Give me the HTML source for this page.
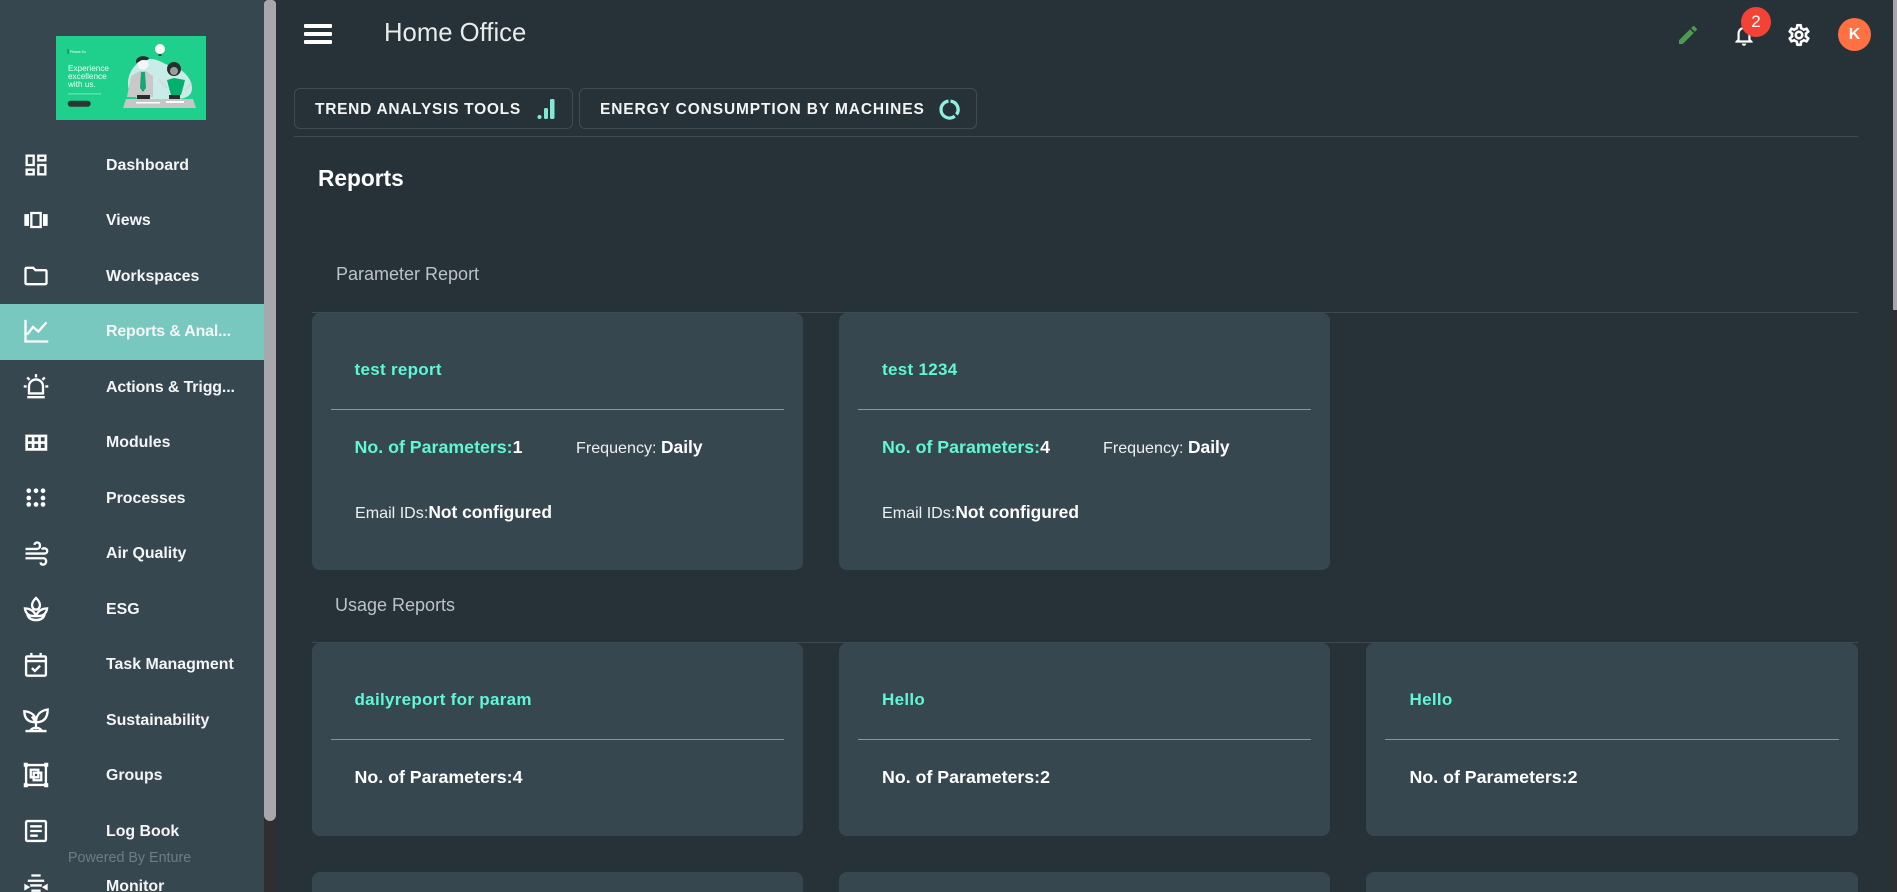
<!DOCTYPE html>
<html><head><meta charset="utf-8"><title>Reports</title>
<style>
*{box-sizing:border-box}
html,body{margin:0;padding:0;width:1897px;height:892px;overflow:hidden;background:#263238;font-family:"Liberation Sans",sans-serif;color:#fff}
#root{position:absolute;left:0;top:0;width:1897px;height:892px;overflow:hidden;background:#263238}
.t{position:absolute;white-space:nowrap;line-height:20px}
.side{position:absolute;left:0;top:0;width:264px;height:892px;background:#37474f;overflow:hidden}
.item{position:absolute;left:106px;font-size:15.9px;font-weight:700;color:#f4f5f5}
.ic{position:absolute;left:21.5px;width:28px;height:28px;fill:none;stroke:#fff;stroke-width:2}
.ic.f{fill:#fff;stroke:none}
.active{position:absolute;left:0;top:304px;width:264px;height:56px;background:#78c8bf}
.track{position:absolute;left:264px;top:0;width:12px;height:892px;background:#2e2f30}
.thumb{position:absolute;left:264px;top:0;width:12px;height:821px;background:#a8a8ac;border-radius:4px 4px 6px 6px}
.card{position:absolute;background:#37474f;border-radius:8px;width:491px}
.div{position:absolute;height:1px;background:#8d9599}
.sec{position:absolute;height:1px;background:#3c4a51;left:312px;width:1546px}
.tab{position:absolute;top:88px;height:41px;border:1px solid #3f4c53;border-radius:6px}
.tabt{font-size:15.5px;font-weight:700;color:#f3f5f5}
.sect{font-size:18px;color:#bcc2c5}
.title{font-size:17px;font-weight:700;letter-spacing:.3px;color:#5ff7d6}
.np{font-size:17.8px;font-weight:700}
.lab{font-size:16.1px;color:#eef0f0}
.val{font-size:17.4px;font-weight:700}
</style></head><body>
<div id="root">

<div class="side">
<svg style="position:absolute;left:56px;top:36px" width="150" height="84" viewBox="0 0 150 84">
<rect width="150" height="84" fill="#1fd08c"/>
<rect x="11.500" y="13" width="1" height="5" fill="#0a7a50"/>
<text x="14" y="17" font-size="3.500" fill="#e8fff6" font-family="Liberation Sans">Please Do</text>
<text x="12" y="35" font-size="8.200" fill="#eafff7" font-family="Liberation Sans">Experience</text>
<text x="12" y="43" font-size="8.200" fill="#eafff7" font-family="Liberation Sans">excellence</text>
<text x="12" y="51" font-size="8.200" fill="#eafff7" font-family="Liberation Sans">with us.</text>
<rect x="12" y="57.500" width="33" height=".8" fill="#c9f5e4" opacity=".7"/>
<rect x="11.700" y="64.700" width="23" height="6" rx="3" fill="#2a3835"/>
<path d="M72 48c0-14 10-25 22-25 10 0 14 6 24 8 10 3 18 12 18 21s-8 11-16 11H88c-8 0-16-4-16-15z" fill="#c9ece8"/>
<circle cx="104" cy="13" r="5" fill="#fff"/><rect x="102.500" y="18" width="3" height="2" fill="#33403e"/>
<path d="M71 61l4-21 9-5h6l7 5v21z" fill="#c9c9c9"/>
<path d="M85 36h4l1 16-3 4-3-4z" fill="#16a873"/>
<circle cx="87" cy="28" r="5.500" fill="#f4f6f5"/><path d="M80 27c-1-6 7-9 13-5-1 3-3 2-6 2s-3 2-7 3z" fill="#262f2e"/>
<rect x="81" y="59" width="13" height="4" fill="#262f2e"/>
<circle cx="118" cy="33" r="7" fill="#262f2e"/><circle cx="118" cy="35" r="4" fill="#9a9e9a"/>
<path d="M111 44l7-2 11 2-2 8-2 7h-10l-2-7z" fill="#03b06e"/>
<rect x="113" y="59" width="11" height="4" fill="#262f2e"/>
<path d="M103 44l8 8M135 47l-6 8" stroke="#d9d9d9" stroke-width="2" fill="none"/>
<path d="M70 63h67l3 9H67z" fill="#c4c7c5"/>
<rect x="80" y="66" width="24" height="1.500" fill="#fff"/><rect x="110" y="65" width="18" height="2" fill="#fff"/>
</svg>

<svg class="ic f" style="top:151px" viewBox="0 0 24 24"><path d="M19 5v2h-4V5h4M9 5v6H5V5h4m10 8v6h-4v-6h4M9 17v2H5v-2h4M21 3h-8v6h8V3zM11 3H3v10h8V3zm10 8h-8v10h8V11zm-10 4H3v6h8v-6z"/></svg>
<svg class="ic f" style="top:206px" viewBox="0 0 24 24"><path d="M2 7h4v10H2V7zm5 12h10V5H7v14zM9 7h6v10H9V7zm9 0h4v10h-4V7z"/></svg>
<svg class="ic f" style="top:262px" viewBox="0 0 24 24"><path d="M9.170 6l2 2H20v10H4V6h5.170M10 4H4c-1.100 0-1.990.9-1.990 2L2 18c0 1.100.9 2 2 2h16c1.100 0 2-.9 2-2V8c0-1.100-.9-2-2-2h-8l-2-2z"/></svg>
<div class="active"></div>
<svg class="ic" style="top:317px" viewBox="0 0 24 24"><path d="M3 2.500V21h19.500M4.500 15l5-6.500 4.500 4 7-8"/></svg>
<svg class="ic" style="top:373px" viewBox="0 0 24 24"><path d="M6 17.500v-6a6 6 0 0 1 12 0v6zM4.500 20.700h15M12 1v2.800M4.500 3.800l2 2M19.500 3.800l-2 2M1.500 11.500h2.500M20 11.500h2.500"/></svg>
<svg class="ic" style="top:428px;stroke-width:2.300" viewBox="0 0 24 24"><path d="M4 6.800h16.500v11.500H4zM4 12.500h16.500M9.500 6.800v11.500M15 6.800v11.500"/></svg>
<svg class="ic f" style="top:484px" viewBox="0 0 24 24"><circle cx="5.800" cy="5.800" r="2"/><circle cx="12" cy="5.800" r="2"/><circle cx="18" cy="5.800" r="2"/><circle cx="5.800" cy="12" r="2"/><circle cx="18" cy="12" r="2"/><circle cx="5.800" cy="17.500" r="2"/><circle cx="12" cy="17.500" r="2"/><circle cx="18" cy="17.500" r="2"/></svg>
<svg class="ic" style="top:539px" viewBox="0 0 24 24"><path d="M3 8.500h10c3 0 3.500-5.500 0-5.500-1.500 0-2.200 1-2.300 2M3 12.500h16c3.500 0 3.500-4.500 0-4.500-1 0-1.700.5-1.900 1M3 16.500h15.500c3 0 3 5.500-.5 5.500-1.500 0-2-1-2.100-2"/></svg>
<svg class="ic" style="top:595px" viewBox="0 0 24 24"><path d="M12 2.500c3.200 3 3.800 5.500 3.200 7.500-.6 1.600-1.800 2.500-3.200 2.500S9.400 11.600 8.800 10c-.6-2 0-4.500 3.200-7.500zM2.500 11.500c4.800.2 8 2.200 9.500 6.500-5.500.5-9-1.800-9.500-6.500zM21.500 11.500c-4.800.2-8 2.200-9.500 6.500 5.500.5 9-1.800 9.500-6.500zM4.500 16.500c1 3.500 4 5 7.500 5s6.500-1.500 7.500-5"/></svg>
<svg class="ic" style="top:650px" viewBox="0 0 24 24"><path d="M4.500 5.500h15a1 1 0 0 1 1 1V21a1 1 0 0 1-1 1h-15a1 1 0 0 1-1-1V6.500a1 1 0 0 1 1-1zM3.500 9.500h17M8 2.500v4M16 2.500v4M8.500 15.500l2.500 2.500 4.500-4.500"/></svg>
<svg class="ic" style="top:706px" viewBox="0 0 24 24"><path d="M12 20V14M12 14C12 8 8 5 2 4.500c0 6 3 9.500 10 9.500zM12 14c0-6 3.500-10 10-11 0 7-3 11-10 11zM8.500 9l3 4.500M3 21.500h18M7 21.500c1-2 3-2.800 5-2.800s4 .8 5 2.800"/></svg>
<svg class="ic" style="top:761px" viewBox="0 0 24 24"><path d="M3.500 3.500h17v17h-17zM7.500 7.500h6.500v6.500H7.500zM10 10h6.500v6.500H10z"/><path d="M1.500 1.500h3.500v3.500H1.500zM19 1.500h3.500v3.500H19zM1.500 19h3.500v3.500H1.500zM19 19h3.500v3.500H19z" fill="#fff" stroke="none"/></svg>
<svg class="ic" style="top:817px" viewBox="0 0 24 24"><path d="M4.500 3.500h15a1 1 0 0 1 1 1v15a1 1 0 0 1-1 1h-15a1 1 0 0 1-1-1v-15a1 1 0 0 1 1-1zM7 8h10M7 12h10M7 16h6.500"/></svg>
<svg class="ic" style="top:872px" viewBox="0 0 24 24"><path d="M8 3h8M5 7.500h14M7 11.500h10M8 16h8"/><path d="M2 10l5 3-5 3zM22 10l-5 3 5 3z" fill="#fff" stroke="none"/></svg>

<div class="t item" style="top:156px">Dashboard</div>
<div class="t item" style="top:211px">Views</div>
<div class="t item" style="top:267px">Workspaces</div>
<div class="t item" style="top:322px;letter-spacing:-.15px">Reports &amp; Anal...</div>
<div class="t item" style="top:378px;letter-spacing:-.1px">Actions &amp; Trigg...</div>
<div class="t item" style="top:433px">Modules</div>
<div class="t item" style="top:489px">Processes</div>
<div class="t item" style="top:544px">Air Quality</div>
<div class="t item" style="top:600px">ESG</div>
<div class="t item" style="top:655px">Task Managment</div>
<div class="t item" style="top:711px">Sustainability</div>
<div class="t item" style="top:766px">Groups</div>
<div class="t item" style="top:822px">Log Book</div>
<div class="t item" style="top:877px">Monitor</div>
<div class="t" style="left:68px;top:848px;font-size:14.3px;color:#6f7c82">Powered By Enture</div>
</div>
<div class="track"></div><div class="thumb"></div>

<div style="position:absolute;left:304px;top:24px;width:28px;height:4px;background:#fff;border-radius:1px"></div>
<div style="position:absolute;left:304px;top:32px;width:28px;height:4px;background:#fff;border-radius:1px"></div>
<div style="position:absolute;left:304px;top:39.500px;width:28px;height:4px;background:#fff;border-radius:1px"></div>
<div class="t" style="left:384px;top:23px;font-size:25.700px;color:#e8ecec">Home Office</div>

<svg style="position:absolute;left:1676px;top:23px" width="24" height="24" viewBox="0 0 24 24" fill="#4b9b50"><path d="M3 17.250V21h3.750L17.810 9.940l-3.750-3.750L3 17.250zM20.710 7.040a1 1 0 0 0 0-1.410l-2.340-2.340a1 1 0 0 0-1.410 0l-1.830 1.830 3.750 3.750 1.830-1.830z"/></svg>
<svg style="position:absolute;left:1730.500px;top:22px" width="26" height="26" viewBox="0 0 24 24" fill="#fff"><path d="M12 22c1.100 0 2-.9 2-2h-4c0 1.100.9 2 2 2zm6-6v-5c0-3.070-1.630-5.640-4.500-6.320V4c0-.83-.67-1.500-1.500-1.500s-1.500.67-1.500 1.500v.68C7.640 5.360 6 7.920 6 11v5l-2 2v1h16v-1l-2-2zm-2 1H8v-6c0-2.480 1.510-4.500 4-4.500s4 2.020 4 4.500v6z"/></svg>
<div style="position:absolute;left:1741px;top:7px;width:30px;height:30px;border-radius:50%;background:#f44336"></div>
<div class="t" style="left:1741px;top:12px;width:30px;text-align:center;font-size:17px">2</div>
<svg style="position:absolute;left:1786px;top:22px" width="26" height="26" viewBox="0 0 24 24" fill="#fff" stroke="#fff" stroke-width=".4"><path d="M19.430 12.980c.04-.32.07-.64.07-.98s-.03-.66-.07-.98l2.110-1.650c.19-.15.24-.42.12-.64l-2-3.460c-.12-.22-.39-.3-.61-.22l-2.490 1c-.52-.4-1.080-.73-1.690-.98l-.38-2.650C14.460 2.180 14.250 2 14 2h-4c-.25 0-.46.18-.49.420l-.38 2.650c-.61.25-1.170.59-1.690.98l-2.490-1c-.23-.09-.49 0-.61.22l-2 3.460c-.13.22-.07.49.12.64l2.110 1.650c-.04.32-.07.65-.07.98s.03.66.07.98l-2.110 1.650c-.19.15-.24.42-.12.64l2 3.460c.12.22.39.3.61.22l2.490-1c.52.4 1.080.73 1.690.98l.38 2.650c.03.24.24.42.49.42h4c.25 0 .46-.18.49-.42l.38-2.650c.61-.25 1.170-.59 1.690-.98l2.490 1c.23.09.49 0 .61-.22l2-3.460c.12-.22.07-.49-.12-.64l-2.110-1.650zm-1.980-1.710c.04.31.05.52.05.73 0 .21-.02.43-.05.73l-.14 1.130.89.7 1.080.84-.7 1.210-1.270-.51-1.040-.42-.9.68c-.43.32-.84.56-1.250.73l-1.060.43-.16 1.130-.2 1.350h-1.400l-.19-1.350-.16-1.130-1.060-.43c-.43-.18-.83-.41-1.230-.71l-.91-.7-1.060.43-1.270.51-.7-1.210 1.080-.84.89-.7-.14-1.130c-.03-.31-.05-.54-.05-.74s.02-.43.05-.73l.14-1.130-.89-.7-1.080-.84.7-1.210 1.270.51 1.040.42.9-.68c.43-.32.84-.56 1.250-.73l1.060-.43.16-1.130.2-1.350h1.390l.19 1.350.16 1.130 1.060.43c.43.18.83.41 1.230.71l.91.7 1.060-.43 1.270-.51.7 1.210-1.070.85-.89.7.14 1.130zM12 8c-2.210 0-4 1.790-4 4s1.790 4 4 4 4-1.790 4-4-1.790-4-4-4zm0 6c-1.100 0-2-.9-2-2s.9-2 2-2 2 .9 2 2-.9 2-2 2z"/></svg>
<div style="position:absolute;left:1838px;top:18px;width:33px;height:33px;border-radius:50%;background:#ff7043"></div>
<div class="t" style="left:1838px;top:24.500px;width:33px;text-align:center;font-size:16px;font-weight:700">K</div>
<div style="position:absolute;left:1893px;top:0;width:4px;height:892px;background:#2e2f30"></div>
<div style="position:absolute;left:1893px;top:0;width:4px;height:310px;background:#a8a8ac"></div>

<div class="tab" style="left:294px;width:279px"></div>
<div class="t tabt" style="left:315px;top:100px;letter-spacing:.72px">TREND ANALYSIS TOOLS</div>
<svg style="position:absolute;left:537px;top:98px" width="20" height="22" viewBox="0 0 20 22" fill="#7fe9d6"><circle cx="2.500" cy="19" r="2"/><rect x="7" y="10" width="4" height="11" rx="1.500"/><rect x="13" y="1" width="4.500" height="20" rx="1.500"/></svg>
<div class="tab" style="left:579px;width:398px"></div>
<div class="t tabt" style="left:600px;top:100px;letter-spacing:.88px">ENERGY CONSUMPTION BY MACHINES</div>
<svg style="position:absolute;left:939px;top:99px" width="21" height="21" viewBox="0 0 21 21" fill="none" stroke="#8ff0df" stroke-width="3.300"><path d="M11.500 2.100a8.500 8.500 0 0 1 6 13.400M15.800 17.200a8.500 8.500 0 0 1-13.800-6.700A8.500 8.500 0 0 1 9.500 2.100"/></svg>
<div style="position:absolute;left:294px;top:136px;width:1564px;height:1px;background:#3f4c53"></div>

<div class="t" style="left:318px;top:168px;font-size:22.700px;font-weight:700">Reports</div>
<div class="t sect" style="left:336px;top:264px">Parameter Report</div>
<div class="sec" style="top:312px"></div>

<div class="card" style="left:312px;top:313px;height:257px"></div>
<div class="t title" style="left:354.500px;top:360px">test report</div>
<div class="div" style="left:331px;top:409px;width:453px"></div>
<div class="t np" style="left:354.500px;top:437px;color:#5ff7d6">No. of Parameters:<span style="color:#fff">1</span></div>
<div class="t lab" style="left:576px;top:437px">Frequency: <span class="val" style="color:#fff">Daily</span></div>
<div class="t lab" style="left:355px;top:502px">Email IDs:<span class="val" style="color:#fff">Not configured</span></div>

<div class="card" style="left:839px;top:313px;height:257px"></div>
<div class="t title" style="left:882px;top:360px">test 1234</div>
<div class="div" style="left:858px;top:409px;width:453px"></div>
<div class="t np" style="left:882px;top:437px;color:#5ff7d6">No. of Parameters:<span style="color:#fff">4</span></div>
<div class="t lab" style="left:1103px;top:437px">Frequency: <span class="val" style="color:#fff">Daily</span></div>
<div class="t lab" style="left:882px;top:502px">Email IDs:<span class="val" style="color:#fff">Not configured</span></div>

<div class="t sect" style="left:335px;top:595px">Usage Reports</div>
<div class="sec" style="top:642px"></div>

<div class="card" style="left:312px;top:643px;height:193px"></div>
<div class="t title" style="left:354.500px;top:690px">dailyreport for param</div>
<div class="div" style="left:331px;top:739px;width:453px"></div>
<div class="t np" style="left:354.500px;top:767px">No. of Parameters:4</div>

<div class="card" style="left:839px;top:643px;height:193px"></div>
<div class="t title" style="left:882px;top:690px">Hello</div>
<div class="div" style="left:858px;top:739px;width:453px"></div>
<div class="t np" style="left:882px;top:767px">No. of Parameters:2</div>

<div class="card" style="left:1366px;top:643px;height:193px;width:492px"></div>
<div class="t title" style="left:1409.500px;top:690px">Hello</div>
<div class="div" style="left:1385px;top:739px;width:454px"></div>
<div class="t np" style="left:1409.500px;top:767px">No. of Parameters:2</div>

<div class="card" style="left:312px;top:872px;height:40px"></div>
<div class="card" style="left:839px;top:872px;height:40px"></div>
<div class="card" style="left:1366px;top:872px;height:40px;width:492px"></div>
</div>
</body></html>
